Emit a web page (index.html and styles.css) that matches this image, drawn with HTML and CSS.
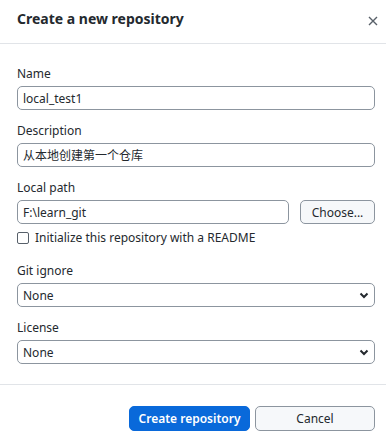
FILE: index.html
```html
<!DOCTYPE html>
<html>
<head>
  <meta charset="utf-8">
  <link rel="stylesheet" href="styles.css">
</head>
<body>
  <div class="dialog">
    <div class="dialog-header">
      <h1 class="dialog-title">Create a new repository</h1>
      <button class="close-btn" title="Close">
        <svg width="10" height="10" viewBox="0 0 10 10">
          <path d="M1 1 L9 9 M9 1 L1 9" stroke="#586069" stroke-width="1.4" fill="none"/>
        </svg>
      </button>
    </div>

    <div class="dialog-body">
      <div class="field">
        <label class="field-label">Name</label>
        <input class="text-input" type="text" value="local_test1">
      </div>

      <div class="field">
        <label class="field-label">Description</label>
        <input class="text-input" type="text" value="从本地创建第一个仓库">
      </div>

      <div class="field field-path">
        <label class="field-label">Local path</label>
        <div class="path-row">
          <input class="text-input" type="text" value="F:\learn_git">
          <button class="btn btn-choose">Choose...</button>
        </div>
      </div>

      <label class="check-row">
        <span class="check-box"></span>
        Initialize this repository with a README
      </label>

      <div class="field">
        <label class="field-label">Git ignore</label>
        <div class="select-wrap">
          <select class="select-input">
            <option>None</option>
          </select>
          <svg class="chevron" width="10" height="7" viewBox="0 0 10 7">
            <path d="M1.5 1.5 L5 5 L8.5 1.5" stroke="#24292e" stroke-width="2" fill="none"/>
          </svg>
        </div>
      </div>

      <div class="field">
        <label class="field-label">License</label>
        <div class="select-wrap">
          <select class="select-input">
            <option>None</option>
          </select>
          <svg class="chevron" width="10" height="7" viewBox="0 0 10 7">
            <path d="M1.5 1.5 L5 5 L8.5 1.5" stroke="#24292e" stroke-width="2" fill="none"/>
          </svg>
        </div>
      </div>
    </div>

    <div class="dialog-footer">
      <button class="btn btn-primary">Create repository</button>
      <button class="btn btn-cancel">Cancel</button>
    </div>
  </div>
</body>
</html>
```

FILE: styles.css
```css
body {
  margin: 0;
  background: #fff;
  font-family: "Noto Sans", "Noto Sans CJK SC", sans-serif;
  font-size: 12px;
  color: #24292e;
}

.dialog {
  width: 386px;
}

.dialog-header {
  display: flex;
  justify-content: space-between;
  align-items: flex-start;
  height: 44px;
  box-sizing: border-box;
  padding: 8px 4px 0 17px;
  border-bottom: 1px solid #e1e4e8;
}

.dialog-title {
  margin: 0;
  font-size: 14px;
  font-weight: 700;
  line-height: 22px;
}

.close-btn {
  border: none;
  background: none;
  padding: 0;
  width: 14px;
  height: 14px;
  margin: 6px 2px 0 0;
  display: flex;
  align-items: center;
  justify-content: center;
}

.dialog-body {
  padding: 20px 11px 20px 17px;
  border-bottom: 1px solid #e1e4e8;
}

.field {
  display: flex;
  flex-direction: column;
  margin-bottom: 11px;
}

.field:last-child {
  margin-bottom: 0;
}

.field-label {
  line-height: 16px;
  padding-top: 2px;
  margin-bottom: 4px;
}

.text-input,
.select-input {
  height: 24px;
  box-sizing: border-box;
  border: 1px solid #8c959f;
  border-radius: 5px;
  padding: 0 5px;
  font: inherit;
  color: #24292e;
  background: #fff;
  outline: none;
}

.field-path {
  margin-bottom: 6px;
}

.path-row {
  display: flex;
  gap: 11px;
}

.path-row .text-input {
  flex: 1;
}

.btn {
  font: inherit;
  height: 24px;
  border-radius: 5px;
  border: 1px solid #8c959f;
  background: #f6f8fa;
  color: #24292e;
  padding: 0;
}

.btn-choose {
  width: 75px;
}

.check-row {
  display: flex;
  align-items: center;
  gap: 6px;
  line-height: 16px;
  margin-bottom: 15px;
}

.check-box {
  width: 10px;
  height: 10px;
  border: 1px solid #57606a;
  border-radius: 2px;
}

.select-wrap {
  position: relative;
  display: flex;
}

.select-input {
  flex: 1;
  appearance: none;
}

.chevron {
  position: absolute;
  right: 6px;
  top: 9px;
}

.dialog-footer {
  display: flex;
  justify-content: flex-end;
  gap: 5px;
  padding: 21px 11px 0 0;
}

.btn-primary {
  width: 121px;
  height: 25px;
  background: #0969da;
  border-color: #0969da;
  color: #fff;
  font-weight: 600;
}

.btn-cancel {
  width: 120px;
  height: 25px;
}
```
